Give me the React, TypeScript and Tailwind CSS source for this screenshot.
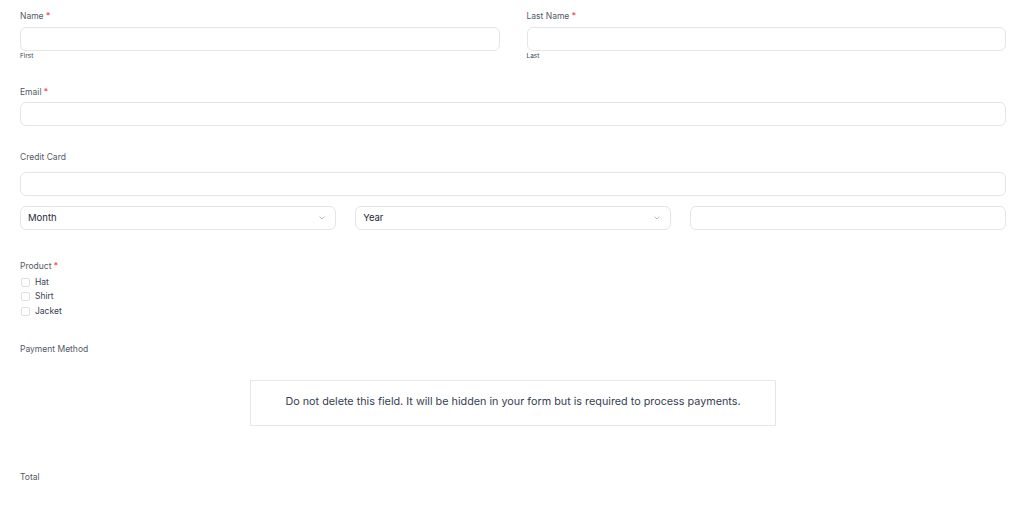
import React from "react";

const font = { fontFamily: "Inter, 'Noto Sans', sans-serif" };

function Label({ text, req }: { text: string; req?: boolean }) {
  return (
    <div className="text-[8.5px] leading-[12px] text-[#525a66]">
      {text}
      {req && <span className="text-[#ef4444]"> *</span>}
    </div>
  );
}

function Input({ className = "" }: { className?: string }) {
  return (
    <div
      className={
        "h-[24px] rounded-[6px] border border-[#e3e5ea] bg-white " + className
      }
    />
  );
}

function Select({ text }: { text: string }) {
  return (
    <div className="h-[24px] rounded-[6px] border border-[#e3e5ea] bg-white flex items-center justify-between pl-[7px] pr-[10px]">
      <span className="text-[9.5px] text-[#1f2937]">{text}</span>
      <svg width="6" height="4" viewBox="0 0 6 4" fill="none">
        <path d="M0.8 0.9L3 3L5.2 0.9" stroke="#a3a8b0" strokeWidth="0.8" strokeLinecap="round" strokeLinejoin="round" />
      </svg>
    </div>
  );
}

function Check({ text }: { text: string }) {
  return (
    <div className="flex items-center h-[14.5px]">
      <div className="w-[9px] h-[9px] rounded-[2px] border border-[#dcdfe4] bg-white ml-[1px]" />
      <span className="ml-[5px] text-[8.5px] text-[#374151]">{text}</span>
    </div>
  );
}

export default function App() {
  return (
    <div className="w-[1024px] h-[512px] bg-white pl-[20px] pr-[18px] pt-[10px] overflow-hidden" style={font}>
      <div className="grid grid-cols-2 gap-x-[27px]">
        <div>
          <Label text="Name" req />
          <Input className="mt-[5px]" />
          <div className="mt-[1px] text-[6.5px] leading-[9px] text-[#374151]">First</div>
        </div>
        <div>
          <Label text="Last Name" req />
          <Input className="mt-[5px]" />
          <div className="mt-[1px] text-[6.5px] leading-[9px] text-[#374151]">Last</div>
        </div>
      </div>

      <div className="mt-[25px]">
        <Label text="Email" req />
        <Input className="mt-[4px]" />
      </div>

      <div className="mt-[25px]">
        <Label text="Credit Card" />
        <Input className="mt-[9px]" />
        <div className="mt-[10px] grid grid-cols-3 gap-x-[19.5px]">
          <Select text="Month" />
          <Select text="Year" />
          <Input />
        </div>
      </div>

      <div className="mt-[30px]">
        <Label text="Product" req />
        <div className="mt-[3px]">
          <Check text="Hat" />
          <Check text="Shirt" />
          <Check text="Jacket" />
        </div>
      </div>

      <div className="mt-[24px]">
        <Label text="Payment Method" />
        <div className="mt-[25px] mx-auto w-[526px] h-[46px] border border-[#e5e7eb] flex items-center justify-center">
          <span className="text-[10.8px] text-[#374151]">
            Do not delete this field. It will be hidden in your form but is required to process payments.
          </span>
        </div>
      </div>

      <div className="mt-[45px]">
        <Label text="Total" />
      </div>
    </div>
  );
}
